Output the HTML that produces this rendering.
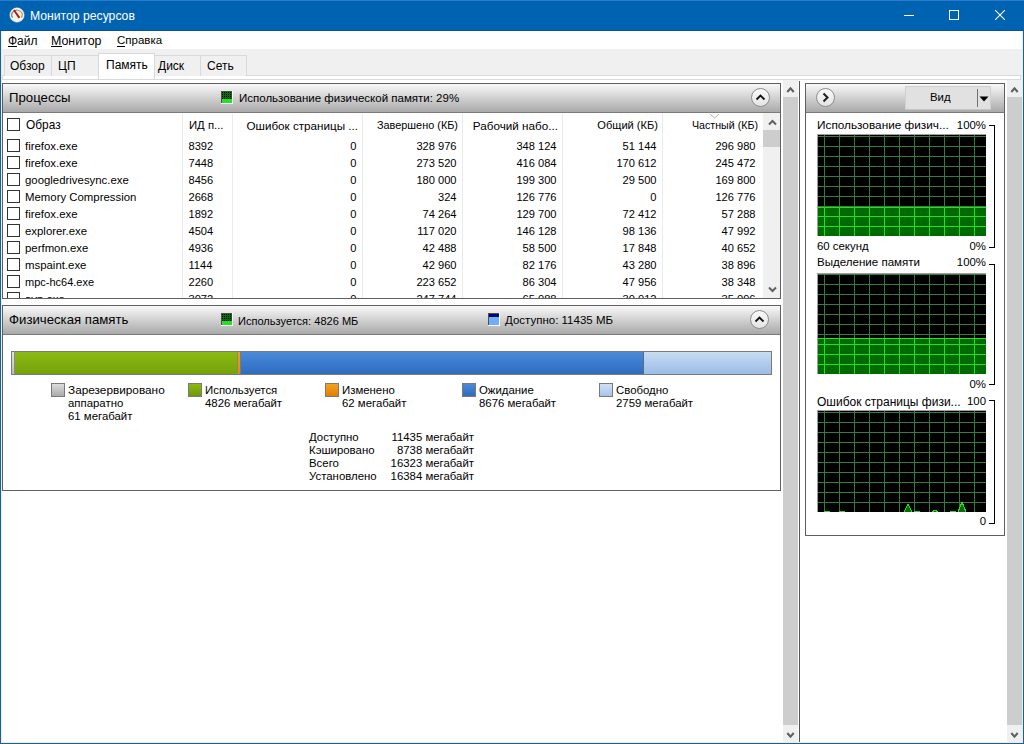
<!DOCTYPE html>
<html><head><meta charset="utf-8">
<style>
*{margin:0;padding:0;box-sizing:border-box}
html,body{width:1024px;height:744px;overflow:hidden;background:#fff;font-family:"Liberation Sans",sans-serif;color:#000;font-size:12px}
div{position:absolute}
.t{white-space:nowrap;line-height:1}
.tab{top:55px;height:21px;background:#f0f0f0;border:1px solid #d9d9d9;border-bottom:none}
.panel{border:1px solid #5f5f5f;background:#fff}
.hdr{left:0;top:0;width:100%;height:29px;background:linear-gradient(#f9f9f9,#a9a9a9);border-bottom:1px solid #7a7a7a}
.cb{width:13px;height:13px;border:1px solid #333;background:#fff}
.row{font-size:11.4px}
.num{text-align:right}
</style></head><body>

<div style="left:0;top:0;width:1024px;height:31px;background:#0063b1"></div>
<div style="left:0;top:0;width:1024px;height:1px;background:#2a7ccc"></div>
<div style="left:0;top:30px;width:1024px;height:1px;background:#0a5296"></div>
<svg style="position:absolute;left:9px;top:7px" width="16" height="16" viewBox="0 0 16 16"><circle cx="8" cy="8" r="7.2" fill="#f7f3ec"/><circle cx="8" cy="8" r="7.2" fill="none" stroke="#ffffff" stroke-opacity="0.5" stroke-width="0.8"/><path d="M3.6 10.6 A4.6 4.6 0 0 1 8 3.3" fill="none" stroke="#7a7a70" stroke-width="1.1"/><path d="M8 3.3 A4.6 4.6 0 0 1 12.4 10.6" fill="none" stroke="#c88a50" stroke-width="1.1"/><path d="M4.2 3.4 L5.6 2.6 L11.2 10.2 L9.6 11.4 Z" fill="#b41414"/></svg>
<div class="t" style="left:30px;top:10px;font-size:12.2px;color:#fff">Монитор ресурсов</div>
<div style="left:904px;top:15px;width:10px;height:1px;background:#fff"></div>
<div style="left:949px;top:10px;width:10px;height:10px;border:1px solid #fff"></div>
<svg style="position:absolute;left:995px;top:10px" width="10" height="10" viewBox="0 0 10 10"><path d="M0 0L10 10M10 0L0 10" stroke="#fff" stroke-width="1.1"/></svg>
<div style="left:1px;top:31px;width:1022px;height:18px;background:#fff"></div>
<div class="t" style="left:8px;top:35px;font-size:12px">Файл</div>
<div style="left:8px;top:46px;width:9px;height:1px;background:#000"></div>
<div class="t" style="left:51px;top:35px;font-size:12.4px">Монитор</div>
<div style="left:51px;top:46px;width:11px;height:1px;background:#000"></div>
<div class="t" style="left:117px;top:35px;font-size:11.5px">Справка</div>
<div style="left:117px;top:46px;width:8px;height:1px;background:#000"></div>
<div style="left:1px;top:49px;width:1022px;height:31px;background:#f0f0f0"></div>
<div style="left:2px;top:75px;width:1019px;height:5px;background:#fff;border:1px solid #d9d9d9;border-top:1px solid #d9d9d9"></div>
<div class="tab" style="left:4px;width:48px"></div>
<div class="t" style="left:10px;top:60px;font-size:12px">Обзор</div>
<div class="tab" style="left:51px;width:48px"></div>
<div class="t" style="left:58px;top:60px;font-size:12px">ЦП</div>
<div class="tab" style="left:154px;width:47px"></div>
<div class="t" style="left:158px;top:60px;font-size:12px">Диск</div>
<div class="tab" style="left:200px;width:47px"></div>
<div class="t" style="left:207px;top:60px;font-size:12px">Сеть</div>
<div style="left:98px;top:53px;width:57px;height:26px;background:#fff;border:1px solid #d9d9d9;border-bottom:none"></div>
<div class="t" style="left:106px;top:59px;font-size:12px">Память</div>
<div style="left:1px;top:80px;width:1022px;height:663px;background:#fff"></div>
<div class="panel" style="left:2px;top:83px;width:779px;height:216px;overflow:hidden">
<div class="hdr"></div>
<div class="t" style="left:6px;top:7px;font-size:13.2px">Процессы</div>
<svg style="position:absolute;left:218px;top:7px" width="12" height="13" viewBox="0 0 12 13" shape-rendering="crispEdges"><rect x="0" y="0" width="12" height="13" fill="#fff"/><rect x="0" y="0" width="11" height="12" fill="#505050"/><rect x="1" y="1" width="10" height="11" fill="#1ee61e"/><rect x="1" y="1" width="10" height="7" fill="#007000"/><rect x="1" y="1" width="1" height="1" fill="#000"/><rect x="3" y="1" width="1" height="1" fill="#000"/><rect x="5" y="1" width="1" height="1" fill="#000"/><rect x="7" y="1" width="1" height="1" fill="#000"/><rect x="9" y="1" width="1" height="1" fill="#000"/><rect x="1" y="3" width="1" height="1" fill="#000"/><rect x="3" y="3" width="1" height="1" fill="#000"/><rect x="5" y="3" width="1" height="1" fill="#000"/><rect x="7" y="3" width="1" height="1" fill="#000"/><rect x="9" y="3" width="1" height="1" fill="#000"/><rect x="1" y="5" width="1" height="1" fill="#000"/><rect x="3" y="5" width="1" height="1" fill="#000"/><rect x="5" y="5" width="1" height="1" fill="#000"/><rect x="7" y="5" width="1" height="1" fill="#000"/><rect x="9" y="5" width="1" height="1" fill="#000"/><rect x="1" y="7" width="1" height="1" fill="#000"/><rect x="3" y="7" width="1" height="1" fill="#000"/><rect x="5" y="7" width="1" height="1" fill="#000"/><rect x="7" y="7" width="1" height="1" fill="#000"/><rect x="9" y="7" width="1" height="1" fill="#000"/></svg>
<div class="t" style="left:236px;top:9px;font-size:11.5px">Использование физической памяти: 29%</div>
<div style="left:748px;top:4px;width:19px;height:19px;border-radius:50%;border:1px solid #8c8c8c;background:linear-gradient(#fafafa,#e4e4e4)"></div>
<svg style="position:absolute;left:752px;top:9px" width="11" height="8" viewBox="0 0 11 8"><path d="M1.5 6.5L5.5 2.5L9.5 6.5" fill="none" stroke="#111" stroke-width="1.8"/></svg>
<div style="left:179px;top:30px;width:1px;height:185px;background:#eaeaea"></div>
<div style="left:229px;top:30px;width:1px;height:185px;background:#eaeaea"></div>
<div style="left:359px;top:30px;width:1px;height:185px;background:#eaeaea"></div>
<div style="left:459px;top:30px;width:1px;height:185px;background:#eaeaea"></div>
<div style="left:559px;top:30px;width:1px;height:185px;background:#eaeaea"></div>
<div style="left:659px;top:30px;width:1px;height:185px;background:#eaeaea"></div>
<div class="cb" style="left:4px;top:34px"></div>
<div class="t" style="left:23px;top:36px;font-size:11.9px">Образ</div>
<div class="t" style="left:186px;top:36px;font-size:11.3px">ИД п...</div>
<div class="t num" style="left:229px;width:126px;top:36px;font-size:11.66px">Ошибок страницы ...</div>
<div class="t num" style="left:359px;width:96px;top:36px;font-size:10.9px">Завершено (КБ)</div>
<div class="t num" style="left:459px;width:96px;top:36px;font-size:11.7px">Рабочий набо...</div>
<div class="t num" style="left:559px;width:96px;top:36px;font-size:11.1px">Общий (КБ)</div>
<div class="t num" style="left:659px;width:96px;top:36px;font-size:10.66px">Частный (КБ)</div>
<svg style="position:absolute;left:706px;top:29px" width="11" height="6" viewBox="0 0 11 6"><path d="M1 1L5.5 5L10 1" fill="none" stroke="#b0b0b0" stroke-width="1"/></svg>
<div class="cb" style="left:4px;top:55px"></div>
<div class="t" style="left:22px;top:57px;font-size:11.4px">firefox.exe</div>
<div class="t" style="left:185.5px;top:57px;font-size:11.1px">8392</div>
<div class="t num" style="left:229px;width:124.5px;top:57px;font-size:11.1px">0</div>
<div class="t num" style="left:359px;width:94.5px;top:57px;font-size:11.1px">328 976</div>
<div class="t num" style="left:459px;width:94.5px;top:57px;font-size:11.1px">348 124</div>
<div class="t num" style="left:559px;width:94.5px;top:57px;font-size:11.1px">51 144</div>
<div class="t num" style="left:659px;width:93.5px;top:57px;font-size:11.1px">296 980</div>
<div class="cb" style="left:4px;top:72px"></div>
<div class="t" style="left:22px;top:74px;font-size:11.4px">firefox.exe</div>
<div class="t" style="left:185.5px;top:74px;font-size:11.1px">7448</div>
<div class="t num" style="left:229px;width:124.5px;top:74px;font-size:11.1px">0</div>
<div class="t num" style="left:359px;width:94.5px;top:74px;font-size:11.1px">273 520</div>
<div class="t num" style="left:459px;width:94.5px;top:74px;font-size:11.1px">416 084</div>
<div class="t num" style="left:559px;width:94.5px;top:74px;font-size:11.1px">170 612</div>
<div class="t num" style="left:659px;width:93.5px;top:74px;font-size:11.1px">245 472</div>
<div class="cb" style="left:4px;top:89px"></div>
<div class="t" style="left:22px;top:91px;font-size:11.4px">googledrivesync.exe</div>
<div class="t" style="left:185.5px;top:91px;font-size:11.1px">8456</div>
<div class="t num" style="left:229px;width:124.5px;top:91px;font-size:11.1px">0</div>
<div class="t num" style="left:359px;width:94.5px;top:91px;font-size:11.1px">180 000</div>
<div class="t num" style="left:459px;width:94.5px;top:91px;font-size:11.1px">199 300</div>
<div class="t num" style="left:559px;width:94.5px;top:91px;font-size:11.1px">29 500</div>
<div class="t num" style="left:659px;width:93.5px;top:91px;font-size:11.1px">169 800</div>
<div class="cb" style="left:4px;top:106px"></div>
<div class="t" style="left:22px;top:108px;font-size:11.4px">Memory Compression</div>
<div class="t" style="left:185.5px;top:108px;font-size:11.1px">2668</div>
<div class="t num" style="left:229px;width:124.5px;top:108px;font-size:11.1px">0</div>
<div class="t num" style="left:359px;width:94.5px;top:108px;font-size:11.1px">324</div>
<div class="t num" style="left:459px;width:94.5px;top:108px;font-size:11.1px">126 776</div>
<div class="t num" style="left:559px;width:94.5px;top:108px;font-size:11.1px">0</div>
<div class="t num" style="left:659px;width:93.5px;top:108px;font-size:11.1px">126 776</div>
<div class="cb" style="left:4px;top:123px"></div>
<div class="t" style="left:22px;top:125px;font-size:11.4px">firefox.exe</div>
<div class="t" style="left:185.5px;top:125px;font-size:11.1px">1892</div>
<div class="t num" style="left:229px;width:124.5px;top:125px;font-size:11.1px">0</div>
<div class="t num" style="left:359px;width:94.5px;top:125px;font-size:11.1px">74 264</div>
<div class="t num" style="left:459px;width:94.5px;top:125px;font-size:11.1px">129 700</div>
<div class="t num" style="left:559px;width:94.5px;top:125px;font-size:11.1px">72 412</div>
<div class="t num" style="left:659px;width:93.5px;top:125px;font-size:11.1px">57 288</div>
<div class="cb" style="left:4px;top:140px"></div>
<div class="t" style="left:22px;top:142px;font-size:11.4px">explorer.exe</div>
<div class="t" style="left:185.5px;top:142px;font-size:11.1px">4504</div>
<div class="t num" style="left:229px;width:124.5px;top:142px;font-size:11.1px">0</div>
<div class="t num" style="left:359px;width:94.5px;top:142px;font-size:11.1px">117 020</div>
<div class="t num" style="left:459px;width:94.5px;top:142px;font-size:11.1px">146 128</div>
<div class="t num" style="left:559px;width:94.5px;top:142px;font-size:11.1px">98 136</div>
<div class="t num" style="left:659px;width:93.5px;top:142px;font-size:11.1px">47 992</div>
<div class="cb" style="left:4px;top:157px"></div>
<div class="t" style="left:22px;top:159px;font-size:11.4px">perfmon.exe</div>
<div class="t" style="left:185.5px;top:159px;font-size:11.1px">4936</div>
<div class="t num" style="left:229px;width:124.5px;top:159px;font-size:11.1px">0</div>
<div class="t num" style="left:359px;width:94.5px;top:159px;font-size:11.1px">42 488</div>
<div class="t num" style="left:459px;width:94.5px;top:159px;font-size:11.1px">58 500</div>
<div class="t num" style="left:559px;width:94.5px;top:159px;font-size:11.1px">17 848</div>
<div class="t num" style="left:659px;width:93.5px;top:159px;font-size:11.1px">40 652</div>
<div class="cb" style="left:4px;top:174px"></div>
<div class="t" style="left:22px;top:176px;font-size:11.4px">mspaint.exe</div>
<div class="t" style="left:185.5px;top:176px;font-size:11.1px">1144</div>
<div class="t num" style="left:229px;width:124.5px;top:176px;font-size:11.1px">0</div>
<div class="t num" style="left:359px;width:94.5px;top:176px;font-size:11.1px">42 960</div>
<div class="t num" style="left:459px;width:94.5px;top:176px;font-size:11.1px">82 176</div>
<div class="t num" style="left:559px;width:94.5px;top:176px;font-size:11.1px">43 280</div>
<div class="t num" style="left:659px;width:93.5px;top:176px;font-size:11.1px">38 896</div>
<div class="cb" style="left:4px;top:191px"></div>
<div class="t" style="left:22px;top:193px;font-size:11.0px">mpc-hc64.exe</div>
<div class="t" style="left:185.5px;top:193px;font-size:11.1px">2260</div>
<div class="t num" style="left:229px;width:124.5px;top:193px;font-size:11.1px">0</div>
<div class="t num" style="left:359px;width:94.5px;top:193px;font-size:11.1px">223 652</div>
<div class="t num" style="left:459px;width:94.5px;top:193px;font-size:11.1px">86 304</div>
<div class="t num" style="left:559px;width:94.5px;top:193px;font-size:11.1px">47 956</div>
<div class="t num" style="left:659px;width:93.5px;top:193px;font-size:11.1px">38 348</div>
<div class="cb" style="left:4px;top:208px"></div>
<div class="t" style="left:22px;top:210px;font-size:11.4px">avp.exe</div>
<div class="t" style="left:185.5px;top:210px;font-size:11.1px">3072</div>
<div class="t num" style="left:229px;width:124.5px;top:210px;font-size:11.1px">0</div>
<div class="t num" style="left:359px;width:94.5px;top:210px;font-size:11.1px">247 744</div>
<div class="t num" style="left:459px;width:94.5px;top:210px;font-size:11.1px">65 088</div>
<div class="t num" style="left:559px;width:94.5px;top:210px;font-size:11.1px">30 012</div>
<div class="t num" style="left:659px;width:93.5px;top:210px;font-size:11.1px">35 096</div>
<div style="left:760px;top:29px;width:17px;height:186px;background:#f0f0f0"></div>
<div style="left:760px;top:46px;width:17px;height:17px;background:#cdcdcd"></div>
<svg style="position:absolute;left:765px;top:35px" width="9" height="7" viewBox="0 0 9 7"><path d="M1 5.5L4.5 2L8 5.5" fill="none" stroke="#606060" stroke-width="2"/></svg>
<svg style="position:absolute;left:765px;top:202px" width="9" height="7" viewBox="0 0 9 7"><path d="M1 1.5L4.5 5L8 1.5" fill="none" stroke="#606060" stroke-width="2"/></svg>
</div>
<div class="panel" style="left:2px;top:305px;width:779px;height:186px">
<div class="hdr"></div>
<div class="t" style="left:6px;top:7px;font-size:13.2px">Физическая память</div>
<svg style="position:absolute;left:218px;top:7px" width="12" height="13" viewBox="0 0 12 13" shape-rendering="crispEdges"><rect x="0" y="0" width="12" height="13" fill="#fff"/><rect x="0" y="0" width="11" height="12" fill="#505050"/><rect x="1" y="1" width="10" height="11" fill="#1ee61e"/><rect x="1" y="1" width="10" height="7" fill="#007000"/><rect x="1" y="1" width="1" height="1" fill="#000"/><rect x="3" y="1" width="1" height="1" fill="#000"/><rect x="5" y="1" width="1" height="1" fill="#000"/><rect x="7" y="1" width="1" height="1" fill="#000"/><rect x="9" y="1" width="1" height="1" fill="#000"/><rect x="1" y="3" width="1" height="1" fill="#000"/><rect x="3" y="3" width="1" height="1" fill="#000"/><rect x="5" y="3" width="1" height="1" fill="#000"/><rect x="7" y="3" width="1" height="1" fill="#000"/><rect x="9" y="3" width="1" height="1" fill="#000"/><rect x="1" y="5" width="1" height="1" fill="#000"/><rect x="3" y="5" width="1" height="1" fill="#000"/><rect x="5" y="5" width="1" height="1" fill="#000"/><rect x="7" y="5" width="1" height="1" fill="#000"/><rect x="9" y="5" width="1" height="1" fill="#000"/><rect x="1" y="7" width="1" height="1" fill="#000"/><rect x="3" y="7" width="1" height="1" fill="#000"/><rect x="5" y="7" width="1" height="1" fill="#000"/><rect x="7" y="7" width="1" height="1" fill="#000"/><rect x="9" y="7" width="1" height="1" fill="#000"/></svg>
<div class="t" style="left:235px;top:10px;font-size:11.05px">Используется: 4826 МБ</div>
<svg style="position:absolute;left:485px;top:7px" width="12" height="13" viewBox="0 0 12 13" shape-rendering="crispEdges"><rect x="0" y="0" width="12" height="13" fill="#fff"/><rect x="0" y="0" width="11" height="12" fill="#505050"/><rect x="1" y="1" width="10" height="11" fill="#6eb0f8"/><rect x="1" y="1" width="10" height="3" fill="#000090"/><rect x="1" y="1" width="1" height="1" fill="#000030"/><rect x="3" y="1" width="1" height="1" fill="#000030"/><rect x="5" y="1" width="1" height="1" fill="#000030"/><rect x="7" y="1" width="1" height="1" fill="#000030"/><rect x="9" y="1" width="1" height="1" fill="#000030"/><rect x="1" y="3" width="1" height="1" fill="#000030"/><rect x="3" y="3" width="1" height="1" fill="#000030"/><rect x="5" y="3" width="1" height="1" fill="#000030"/><rect x="7" y="3" width="1" height="1" fill="#000030"/><rect x="9" y="3" width="1" height="1" fill="#000030"/></svg>
<div class="t" style="left:502px;top:9px;font-size:11.5px">Доступно: 11435 МБ</div>
<div style="left:747px;top:4px;width:19px;height:19px;border-radius:50%;border:1px solid #8c8c8c;background:linear-gradient(#fafafa,#e4e4e4)"></div>
<svg style="position:absolute;left:751px;top:9px" width="11" height="8" viewBox="0 0 11 8"><path d="M1.5 6.5L5.5 2.5L9.5 6.5" fill="none" stroke="#111" stroke-width="1.8"/></svg>
<div style="left:8px;top:45px;width:761px;height:24px;border:1px solid #7a7a7a;background:#fff"></div>
<div style="left:9px;top:46px;width:2px;height:22px;background:linear-gradient(#e4e4e4,#bcbcbc)"></div>
<div style="left:11px;top:46px;width:1px;height:22px;background:#8c8c8c"></div>
<div style="left:12px;top:46px;width:222px;height:22px;background:linear-gradient(#8cba14,#74a20a)"></div>
<div style="left:234px;top:46px;width:1px;height:22px;background:#8a8a60"></div>
<div style="left:235px;top:46px;width:2px;height:22px;background:linear-gradient(#f2a020,#e08a08)"></div>
<div style="left:237px;top:46px;width:1px;height:22px;background:#7a7a7a"></div>
<div style="left:238px;top:46px;width:402px;height:22px;background:linear-gradient(#4a8ad8,#2e6cc0)"></div>
<div style="left:640px;top:46px;width:1px;height:22px;background:#5a6a80"></div>
<div style="left:641px;top:46px;width:127px;height:22px;background:linear-gradient(#c8dcf2,#9cbce6)"></div>
<div style="left:48px;top:77px;width:14px;height:14px;border:1px solid #7a7a7a;background:linear-gradient(#dcdcdc,#aaaaaa)"></div>
<div class="t" style="left:65px;top:79px;font-size:11.8px">Зарезервировано</div>
<div class="t" style="left:65px;top:92px;font-size:11.4px">аппаратно</div>
<div class="t" style="left:65px;top:105px;font-size:11.4px">61 мегабайт</div>
<div style="left:185px;top:77px;width:14px;height:14px;border:1px solid #7a7a7a;background:linear-gradient(#8ab814,#6c9a08)"></div>
<div class="t" style="left:202px;top:79px;font-size:11.4px">Используется</div>
<div class="t" style="left:202px;top:92px;font-size:11.4px">4826 мегабайт</div>
<div style="left:322px;top:77px;width:14px;height:14px;border:1px solid #7a7a7a;background:linear-gradient(#f6a020,#e08000)"></div>
<div class="t" style="left:339px;top:79px;font-size:11.4px">Изменено</div>
<div class="t" style="left:339px;top:92px;font-size:11.4px">62 мегабайт</div>
<div style="left:459px;top:77px;width:14px;height:14px;border:1px solid #7a7a7a;background:linear-gradient(#4a8ad8,#2e6cc0)"></div>
<div class="t" style="left:476px;top:79px;font-size:11.4px">Ожидание</div>
<div class="t" style="left:476px;top:92px;font-size:11.4px">8676 мегабайт</div>
<div style="left:596px;top:77px;width:14px;height:14px;border:1px solid #7a7a7a;background:linear-gradient(#d0e0f4,#a8c4ea)"></div>
<div class="t" style="left:613px;top:79px;font-size:11.4px">Свободно</div>
<div class="t" style="left:613px;top:92px;font-size:11.4px">2759 мегабайт</div>
<div class="t" style="left:306px;top:126px;font-size:11.4px">Доступно</div>
<div class="t" style="left:377px;width:94px;text-align:right;top:126px;font-size:11.4px">11435 мегабайт</div>
<div class="t" style="left:306px;top:139px;font-size:11.4px">Кэшировано</div>
<div class="t" style="left:377px;width:94px;text-align:right;top:139px;font-size:11.4px">8738 мегабайт</div>
<div class="t" style="left:306px;top:152px;font-size:11.4px">Всего</div>
<div class="t" style="left:377px;width:94px;text-align:right;top:152px;font-size:11.4px">16323 мегабайт</div>
<div class="t" style="left:306px;top:165px;font-size:11.4px">Установлено</div>
<div class="t" style="left:377px;width:94px;text-align:right;top:165px;font-size:11.4px">16384 мегабайт</div>
</div>
<div style="left:783px;top:80px;width:15px;height:663px;background:#f0f0f0"></div>
<div style="left:783px;top:97px;width:15px;height:628px;background:#cdcdcd"></div>
<svg style="position:absolute;left:786px;top:86px" width="9" height="7" viewBox="0 0 9 7"><path d="M1.3 6L4.5 2.4L7.7 6" fill="none" stroke="#606060" stroke-width="2.1"/></svg>
<svg style="position:absolute;left:786px;top:732px" width="9" height="7" viewBox="0 0 9 7"><path d="M1.3 1L4.5 4.6L7.7 1" fill="none" stroke="#606060" stroke-width="2.1"/></svg>
<div style="left:799px;top:81px;width:1px;height:662px;background:#555"></div>
<div class="panel" style="left:805px;top:83px;width:200px;height:453px">
<div class="hdr"></div>
<div style="left:10px;top:4px;width:19px;height:19px;border-radius:50%;border:1px solid #8c8c8c;background:linear-gradient(#fafafa,#e4e4e4)"></div>
<svg style="position:absolute;left:15px;top:8px" width="9" height="11" viewBox="0 0 9 11"><path d="M2.5 1.5L6.5 5.5L2.5 9.5" fill="none" stroke="#222" stroke-width="2"/></svg>
<div style="left:99px;top:2px;width:86px;height:24px;background:#e1e1e1;border:1px solid #d0d0d0;border-bottom-color:#c4c4c4"></div>
<div class="t" style="left:124px;top:8px;font-size:11.4px">Вид</div>
<div style="left:171px;top:5px;width:1px;height:18px;background:#707070"></div>
<svg style="position:absolute;left:173px;top:12px" width="10" height="6" viewBox="0 0 10 6"><path d="M0.5 0.5H9.5L5 5.5Z" fill="#000"/></svg>
<div class="t" style="left:11px;top:36px;font-size:11.8px">Использование физич...</div>
<div class="t" style="left:100px;width:80px;text-align:right;top:36px;font-size:11.4px">100%</div>
<div class="t" style="left:100px;width:80px;text-align:right;top:157px;font-size:11.4px">0%</div>
<div class="t" style="left:11px;top:157px;font-size:11.4px">60 секунд</div>
<div style="left:183px;top:41px;width:6px;height:123px;border:1px solid #000;border-left:none"></div>
<div style="left:11px;top:50px;width:169px;height:102px;background:#000;border-top:1px solid #a0a0a0;border-left:1px solid #a0a0a0"></div>
<svg style="position:absolute;left:12px;top:51px" width="168" height="101" viewBox="0 0 168 101" shape-rendering="crispEdges"><rect x="0" y="72" width="168" height="29" fill="#006b00"/><rect x="6" y="0" width="1" height="72" fill="#357d3e"/><rect x="6" y="72" width="1" height="29" fill="#22e022"/><rect x="21" y="0" width="1" height="72" fill="#357d3e"/><rect x="21" y="72" width="1" height="29" fill="#22e022"/><rect x="36" y="0" width="1" height="72" fill="#357d3e"/><rect x="36" y="72" width="1" height="29" fill="#22e022"/><rect x="51" y="0" width="1" height="72" fill="#357d3e"/><rect x="51" y="72" width="1" height="29" fill="#22e022"/><rect x="66" y="0" width="1" height="72" fill="#357d3e"/><rect x="66" y="72" width="1" height="29" fill="#22e022"/><rect x="81" y="0" width="1" height="72" fill="#357d3e"/><rect x="81" y="72" width="1" height="29" fill="#22e022"/><rect x="96" y="0" width="1" height="72" fill="#357d3e"/><rect x="96" y="72" width="1" height="29" fill="#22e022"/><rect x="111" y="0" width="1" height="72" fill="#357d3e"/><rect x="111" y="72" width="1" height="29" fill="#22e022"/><rect x="126" y="0" width="1" height="72" fill="#357d3e"/><rect x="126" y="72" width="1" height="29" fill="#22e022"/><rect x="141" y="0" width="1" height="72" fill="#357d3e"/><rect x="141" y="72" width="1" height="29" fill="#22e022"/><rect x="156" y="0" width="1" height="72" fill="#357d3e"/><rect x="156" y="72" width="1" height="29" fill="#22e022"/><rect x="0" y="1" width="168" height="1" fill="#357d3e"/><rect x="0" y="11" width="168" height="1" fill="#357d3e"/><rect x="0" y="21" width="168" height="1" fill="#357d3e"/><rect x="0" y="31" width="168" height="1" fill="#357d3e"/><rect x="0" y="41" width="168" height="1" fill="#357d3e"/><rect x="0" y="51" width="168" height="1" fill="#357d3e"/><rect x="0" y="61" width="168" height="1" fill="#357d3e"/><rect x="0" y="71" width="168" height="1" fill="#357d3e"/><rect x="0" y="81" width="168" height="1" fill="#22e022"/><rect x="0" y="91" width="168" height="1" fill="#22e022"/><rect x="0" y="72" width="168" height="1" fill="#22e022"/></svg>
<div class="t" style="left:11px;top:173px;font-size:11.55px">Выделение памяти</div>
<div class="t" style="left:100px;width:80px;text-align:right;top:173px;font-size:11.4px">100%</div>
<div class="t" style="left:100px;width:80px;text-align:right;top:295px;font-size:11.4px">0%</div>
<div style="left:183px;top:180px;width:6px;height:121px;border:1px solid #000;border-left:none"></div>
<div style="left:11px;top:189px;width:169px;height:101px;background:#000;border-top:1px solid #a0a0a0;border-left:1px solid #a0a0a0"></div>
<svg style="position:absolute;left:12px;top:190px" width="168" height="100" viewBox="0 0 168 100" shape-rendering="crispEdges"><rect x="0" y="64" width="168" height="36" fill="#006b00"/><rect x="6" y="0" width="1" height="64" fill="#357d3e"/><rect x="6" y="64" width="1" height="36" fill="#22e022"/><rect x="21" y="0" width="1" height="64" fill="#357d3e"/><rect x="21" y="64" width="1" height="36" fill="#22e022"/><rect x="36" y="0" width="1" height="64" fill="#357d3e"/><rect x="36" y="64" width="1" height="36" fill="#22e022"/><rect x="51" y="0" width="1" height="64" fill="#357d3e"/><rect x="51" y="64" width="1" height="36" fill="#22e022"/><rect x="66" y="0" width="1" height="64" fill="#357d3e"/><rect x="66" y="64" width="1" height="36" fill="#22e022"/><rect x="81" y="0" width="1" height="64" fill="#357d3e"/><rect x="81" y="64" width="1" height="36" fill="#22e022"/><rect x="96" y="0" width="1" height="64" fill="#357d3e"/><rect x="96" y="64" width="1" height="36" fill="#22e022"/><rect x="111" y="0" width="1" height="64" fill="#357d3e"/><rect x="111" y="64" width="1" height="36" fill="#22e022"/><rect x="126" y="0" width="1" height="64" fill="#357d3e"/><rect x="126" y="64" width="1" height="36" fill="#22e022"/><rect x="141" y="0" width="1" height="64" fill="#357d3e"/><rect x="141" y="64" width="1" height="36" fill="#22e022"/><rect x="156" y="0" width="1" height="64" fill="#357d3e"/><rect x="156" y="64" width="1" height="36" fill="#22e022"/><rect x="0" y="0" width="168" height="1" fill="#357d3e"/><rect x="0" y="10" width="168" height="1" fill="#357d3e"/><rect x="0" y="20" width="168" height="1" fill="#357d3e"/><rect x="0" y="30" width="168" height="1" fill="#357d3e"/><rect x="0" y="40" width="168" height="1" fill="#357d3e"/><rect x="0" y="50" width="168" height="1" fill="#357d3e"/><rect x="0" y="60" width="168" height="1" fill="#357d3e"/><rect x="0" y="70" width="168" height="1" fill="#22e022"/><rect x="0" y="80" width="168" height="1" fill="#22e022"/><rect x="0" y="90" width="168" height="1" fill="#22e022"/><rect x="0" y="64" width="168" height="1" fill="#22e022"/></svg>
<div class="t" style="left:11px;top:312px;font-size:12px">Ошибок страницы физи...</div>
<div class="t" style="left:100px;width:80px;text-align:right;top:312px;font-size:11.4px">100</div>
<div class="t" style="left:100px;width:80px;text-align:right;top:432px;font-size:11.4px">0</div>
<div style="left:183px;top:316px;width:6px;height:124px;border:1px solid #000;border-left:none"></div>
<div style="left:11px;top:326px;width:169px;height:102px;background:#000;border-top:1px solid #a0a0a0;border-left:1px solid #a0a0a0"></div>
<svg style="position:absolute;left:12px;top:327px" width="168" height="101" viewBox="0 0 168 101" shape-rendering="crispEdges"><rect x="6" y="0" width="1" height="101" fill="#357d3e"/><rect x="21" y="0" width="1" height="101" fill="#357d3e"/><rect x="36" y="0" width="1" height="101" fill="#357d3e"/><rect x="51" y="0" width="1" height="101" fill="#357d3e"/><rect x="66" y="0" width="1" height="101" fill="#357d3e"/><rect x="81" y="0" width="1" height="101" fill="#357d3e"/><rect x="96" y="0" width="1" height="101" fill="#357d3e"/><rect x="111" y="0" width="1" height="101" fill="#357d3e"/><rect x="126" y="0" width="1" height="101" fill="#357d3e"/><rect x="141" y="0" width="1" height="101" fill="#357d3e"/><rect x="156" y="0" width="1" height="101" fill="#357d3e"/><rect x="0" y="1" width="168" height="1" fill="#357d3e"/><rect x="0" y="11" width="168" height="1" fill="#357d3e"/><rect x="0" y="21" width="168" height="1" fill="#357d3e"/><rect x="0" y="31" width="168" height="1" fill="#357d3e"/><rect x="0" y="41" width="168" height="1" fill="#357d3e"/><rect x="0" y="51" width="168" height="1" fill="#357d3e"/><rect x="0" y="61" width="168" height="1" fill="#357d3e"/><rect x="0" y="71" width="168" height="1" fill="#357d3e"/><rect x="0" y="81" width="168" height="1" fill="#357d3e"/><rect x="0" y="91" width="168" height="1" fill="#357d3e"/><path d="M6 101 L9 100 L12 101" fill="#0c6a0c" stroke="#22e022" stroke-width="1.2"/><path d="M21 101 L24 100 L27 101" fill="#0c6a0c" stroke="#22e022" stroke-width="1.2"/><path d="M86 101 L90 93 L94 101" fill="#0c6a0c" stroke="#22e022" stroke-width="1.2"/><path d="M96 101 L99 100 L102 101" fill="#0c6a0c" stroke="#22e022" stroke-width="1.2"/><path d="M114 101 L117 99 L120 101" fill="#0c6a0c" stroke="#22e022" stroke-width="1.2"/><path d="M132 101 L135 100 L138 101" fill="#0c6a0c" stroke="#22e022" stroke-width="1.2"/><path d="M140 101 L144 91 L148 101" fill="#0c6a0c" stroke="#22e022" stroke-width="1.2"/></svg>
</div>
<div style="left:1007px;top:80px;width:15px;height:663px;background:#f0f0f0"></div>
<div style="left:1007px;top:97px;width:15px;height:628px;background:#cdcdcd"></div>
<svg style="position:absolute;left:1010px;top:732px" width="9" height="7" viewBox="0 0 9 7"><path d="M1.3 1L4.5 4.6L7.7 1" fill="none" stroke="#606060" stroke-width="2.1"/></svg>
<svg style="position:absolute;left:1010px;top:86px" width="9" height="7" viewBox="0 0 9 7"><path d="M1.3 6L4.5 2.4L7.7 6" fill="none" stroke="#606060" stroke-width="2.1"/></svg>
<div style="left:0;top:31px;width:1px;height:713px;background:#2a5c86"></div>
<div style="left:1px;top:31px;width:1px;height:712px;background:#d4f4fc"></div>
<div style="left:1023px;top:31px;width:1px;height:713px;background:#2a5c86"></div>
<div style="left:1022px;top:31px;width:1px;height:712px;background:#d4f4fc"></div>
<div style="left:1px;top:742px;width:1022px;height:1px;background:#d4f4fc"></div>
<div style="left:0;top:743px;width:1024px;height:1px;background:#2a5c86"></div>
</body></html>
